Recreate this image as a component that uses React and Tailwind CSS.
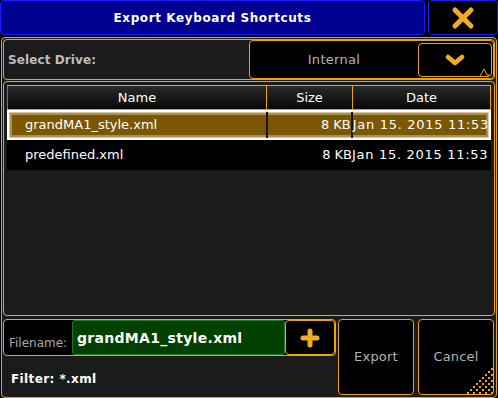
import React from 'react';

const ORANGE = '#eea600';

const files = [
    { name: 'grandMA1_style.xml', size: '8 KB', date: 'Jan 15. 2015 11:53', selected: true },
    { name: 'predefined.xml', size: '8 KB', date: 'Jan 15. 2015 11:53', selected: false },
];

const Grip = () => {
    const dots = [];
    for (let r = 0; r < 9; r++) {
        for (let c = 0; c < 9; c++) {
            if (r + c >= 8 && (r + c) % 2 === 0) {
                dots.push(<rect key={`${r}-${c}`} x={c * 3} y={r * 3} width="2" height="2" fill={ORANGE} />);
            }
        }
    }
    return (
        <svg width="27" height="27" className="absolute right-[2px] bottom-[2px] pointer-events-none">
            {dots}
        </svg>
    );
};

const App = () => {
    return (
        <div className="w-[498px] h-[398px] bg-black flex flex-col overflow-hidden" style={{ fontFamily: '"DejaVu Sans", sans-serif' }}>
            {/* Title bar */}
            <div className="h-[35px] flex gap-[3px]">
                <div className="w-[425px] bg-[#000090] border border-[#1a1aff] rounded-[4px] flex items-center justify-center">
                    <span className="text-white font-bold text-[12px] tracking-[0.6px]">Export Keyboard Shortcuts</span>
                </div>
                <div className="w-[70px] bg-black border border-[#1a1aff] rounded-[4px] flex items-center justify-center">
                    <svg width="24" height="24" viewBox="0 0 24 24">
                        <path d="M4 4 L20 20 M20 4 L4 20" stroke="#f2ac22" strokeWidth="5" strokeLinecap="round" fill="none" />
                    </svg>
                </div>
            </div>

            {/* Body */}
            <div className="relative mt-[2px] ml-[1px] w-[496px] h-[361px] bg-[#1b1b1b] border border-[#eea600] rounded-[4px] p-[1px] flex flex-col">
                {/* Select drive */}
                <div className="h-[41px] border border-[#eea600] rounded-[4px] flex items-center pl-[4px]">
                    <span className="text-[#bdbdbd] font-bold text-[12px] tracking-[0.1px]">Select Drive:</span>
                    <div className="relative ml-auto h-[39px] w-[245px] bg-black border border-[#eea600] rounded-[4px] flex items-center">
                        <span className="flex-1 text-center text-[#b4b4b4] text-[13px] tracking-[0.3px]">Internal</span>
                        <div className="relative w-[74px] h-[34px] mr-[1px] border border-[#eea600] rounded-[4px] flex items-center justify-center">
                            <svg width="20" height="12" viewBox="0 0 20 12">
                                <path d="M3 3 L10 9 L17 3" stroke="#f2ac22" strokeWidth="4.5" strokeLinecap="round" strokeLinejoin="round" fill="none" />
                            </svg>
                            <svg width="10" height="9" viewBox="0 0 10 9" className="absolute right-[1px] bottom-[-1px]">
                                <path d="M0 8 L4 1 L7 7 L10 7" stroke={ORANGE} strokeWidth="1" fill="none" />
                            </svg>
                        </div>
                    </div>
                </div>

                {/* File list */}
                <div className="mt-[1px] h-[235px] border border-[#eea600] rounded-[4px] pt-[3px] px-[3px]">
                    <div className="w-[484px] h-[25px] flex text-white text-[13px] bg-gradient-to-b from-[#2a2a2a] to-[#080808] border-y border-[#eea600]">
                        <div className="w-[259px] border-l border-[#a07000] flex items-center justify-center">Name</div>
                        <div className="w-[86px] border-l border-[#eea600] flex items-center justify-center">Size</div>
                        <div className="flex-1 border-x border-[#eea600] flex items-center justify-center">Date</div>
                    </div>
                    {files.map((f) => (
                        <div
                            key={f.name}
                            className={`w-[484px] h-[30px] flex items-center text-white text-[13px] ${f.selected
                                ? 'bg-[#7a5700] border-2 border-white shadow-[inset_0_0_0_1px_#d9c99c,inset_0_0_0_3px_#a88f58]'
                                : 'bg-black'
                                }`}
                        >
                            <div className={`w-[259px] h-full flex items-center ${f.selected ? 'pl-[16px]' : 'pl-[18px]'}`}>{f.name}</div>
                            <div className={`w-[86px] h-full flex items-center justify-end ${f.selected ? 'border-l-2 border-[#1a1408]' : ''}`}>{f.size}</div>
                            <div className={`flex-1 h-full flex items-center whitespace-nowrap tracking-[0.7px] ${f.selected ? 'border-l-2 border-[#1a1408]' : ''}`}>{f.date}</div>
                        </div>
                    ))}
                </div>

                {/* Bottom controls */}
                <div className="mt-[3px] flex">
                    <div className="w-[333px] flex flex-col">
                        <div className="h-[37px] bg-black border border-[#eea600] rounded-[4px] flex">
                            <div className="w-[68px] flex items-end pb-[3px] pl-[5px] text-[#a8a8a8] text-[12px]">Filename:</div>
                            <div className="w-[213px] bg-[#004000] border border-[#1f7a1f] rounded-[3px] flex items-start pt-[7px] pl-[4px] text-white font-bold text-[14px] tracking-[0.3px]">grandMA1_style.xml</div>
                            <div className="flex-1 border border-[#eea600] rounded-[4px] flex items-center justify-center">
                                <svg width="20" height="20" viewBox="0 0 20 20">
                                    <path d="M10 3 V17 M3 10 H17" stroke="#f2ac22" strokeWidth="5" strokeLinecap="round" fill="none" />
                                </svg>
                            </div>
                        </div>
                        <div className="mt-[14px] pl-[8px] text-white font-bold text-[12px] tracking-[0.4px]">Filter: *.xml</div>
                    </div>
                    <div className="ml-[2px] w-[76px] h-[76px] bg-black border border-[#eea600] rounded-[4px] flex items-center justify-center text-[#b4b4b4] text-[13px] tracking-[0.2px]">Export</div>
                    <div className="ml-[4px] w-[76px] h-[76px] bg-black border border-[#eea600] rounded-[4px] flex items-center justify-center text-[#b4b4b4] text-[13px] tracking-[0.2px]">Cancel</div>
                </div>
                <Grip />
            </div>
        </div>
    );
};

export default App;
